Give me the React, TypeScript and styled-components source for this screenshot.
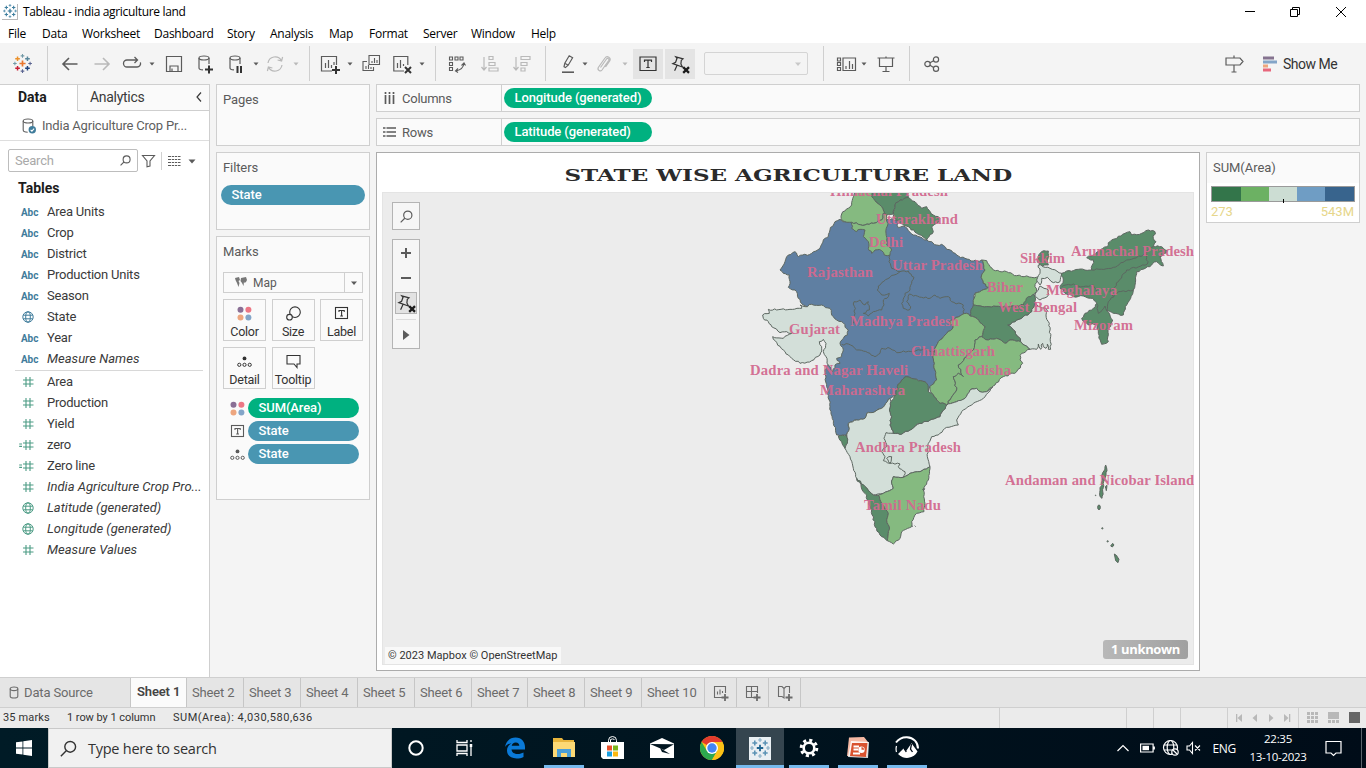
import React from 'react';
import styled, { createGlobalStyle, css } from 'styled-components';

const GlobalStyle = createGlobalStyle`
  * { box-sizing: border-box; }
  html, body { margin: 0; padding: 0; overflow: hidden; }
  svg { display: block; flex: none; }
`;

const ui = `Roboto, 'Liberation Sans', sans-serif`;
const segoe = `'Open Sans', 'Noto Sans', sans-serif`;
const line = '#cfcfcf';
const ink = '#5b5b5b';

const Window = styled.div`
  width: 1366px;
  height: 768px;
  display: flex;
  flex-direction: column;
  background: #f4f4f4;
  font-family: ${ui};
  font-size: 13px;
  color: #3a3a3a;
  white-space: nowrap;
  overflow: hidden;
`;

/* ---------- title and menu ---------- */
const TitleBar = styled.header`
  height: 23px;
  flex: none;
  background: #fff;
  display: flex;
  align-items: center;
  padding-left: 2px;
  font: 12px ${segoe};
  color: #000;
  letter-spacing: -0.33px;
`;
const AppBadge = styled.span`
  width: 16px;
  height: 16px;
  display: grid;
  place-items: center;
  border-right: 1px solid #b9b9b9;
  border-bottom: 1px solid #b9b9b9;
`;
const TitleText = styled.span`
  margin-left: 5px;
  flex: 1;
`;
const WindowButtons = styled.div`
  display: flex;
  gap: 34px;
  padding-right: 19px;
`;
const MenuBar = styled.nav`
  height: 20px;
  flex: none;
  background: #fff;
  display: flex;
  align-items: center;
  padding: 1px 0 0 8px;
  font: 12px ${segoe};
  color: #000;
  letter-spacing: -0.25px;
`;
const MenuItem = styled.span<{ $w: number }>`
  width: ${(p) => p.$w}px;
  line-height: 18px;
`;

/* ---------- toolbar ---------- */
const Toolbar = styled.div`
  height: 41px;
  flex: none;
  display: flex;
  align-items: center;
  padding-left: 13px;
  color: ${ink};
`;
const Slot = styled.span<{ $gap: number; $dim?: boolean }>`
  margin-left: ${(p) => p.$gap}px;
  flex: none;
  color: ${(p) => (p.$dim ? '#b9b9b9' : ink)};
`;
const Divider = styled.i<{ $gap: number }>`
  width: 1px;
  height: 35px;
  margin-left: ${(p) => p.$gap}px;
  background: ${line};
`;
const ToggleButton = styled.span<{ $gap: number }>`
  width: 30px;
  height: 30px;
  margin-left: ${(p) => p.$gap}px;
  background: #e4e4e4;
  display: grid;
  place-items: center;
  color: #333;
`;
const FitSelect = styled.span`
  width: 104px;
  height: 23px;
  margin-left: 9px;
  border: 1px solid #d4d4d4;
  border-radius: 2px;
  display: flex;
  align-items: center;
  justify-content: flex-end;
  padding-right: 5px;
  color: #c8c8c8;
`;
const ShowMe = styled.span`
  margin-left: 5px;
  font-size: 14px;
  letter-spacing: -0.5px;
  color: #333;
`;

/* ---------- body ---------- */
const Body = styled.main`
  height: 593px;
  flex: none;
  display: flex;
`;
const DataPane = styled.aside`
  width: 210px;
  flex: none;
  background: #fff;
  border-right: 1px solid ${line};
  border-top: 1px solid ${line};
`;
const PaneTabs = styled.div`
  display: flex;
  height: 26px;
`;
const DataTab = styled.div`
  width: 77px;
  padding-left: 18px;
  line-height: 25px;
  font-size: 14px;
  font-weight: 700;
  color: #1c1c1c;
`;
const AnalyticsTab = styled.div`
  flex: 1;
  display: flex;
  align-items: center;
  justify-content: space-between;
  padding: 0 6px 1px 12px;
  background: #fafafa;
  border-left: 1px solid ${line};
  border-bottom: 1px solid ${line};
  font-size: 14px;
  letter-spacing: -0.3px;
  color: #3a3a3a;
`;
const SourceRow = styled.div`
  height: 30px;
  border-bottom: 1px solid #dedede;
  display: flex;
  align-items: center;
  gap: 5px;
  padding-left: 22px;
  letter-spacing: -0.2px;
  color: #5f5f5f;
`;
const SearchRow = styled.div`
  display: flex;
  align-items: center;
  padding: 8px 0 0 8px;
  color: ${ink};
`;
const SearchBox = styled.div`
  width: 130px;
  height: 23px;
  border: 1px solid #bdbdbd;
  border-radius: 2px;
  display: flex;
  align-items: center;
  justify-content: space-between;
  padding: 0 6px;
  letter-spacing: -0.2px;
  color: #a9a9a9;
`;
const TablesTitle = styled.h2`
  margin: 7px 0 0 18px;
  font-size: 14px;
  line-height: 19px;
  font-weight: 700;
  color: #1c1c1c;
`;
const FieldList = styled.ul<{ $second?: boolean }>`
  list-style: none;
  margin: ${(p) => (p.$second ? '1px 0 0 15px' : '3px 0 0')};
  padding: 0;
  ${(p) =>
    p.$second &&
    css`
      width: 188px;
      border-top: 1px solid #d8d8d8;
    `}
`;
const Field = styled.li<{ $second?: boolean; $italic?: boolean }>`
  height: 21px;
  display: flex;
  align-items: center;
  padding-left: ${(p) => (p.$second ? 3 : 18)}px;
  font-style: ${(p) => (p.$italic ? 'italic' : 'normal')};
  letter-spacing: ${(p) => (p.$italic ? 0.02 : -0.22)}px;
`;
const FieldIcon = styled.span<{ $green?: boolean }>`
  width: 29px;
  display: flex;
  align-items: center;
  font: 700 10px ${ui};
  letter-spacing: -0.1px;
  color: ${(p) => (p.$green ? '#4b9b84' : '#3f7c9b')};
`;
const AbcMark = styled.span`
  padding: 1px 0 0 3px;
`;

const Cards = styled.section`
  width: 154px;
  margin-left: 6px;
  flex: none;
  display: flex;
  flex-direction: column;
  gap: 6px;
`;
const Card = styled.div<{ $h: number }>`
  height: ${(p) => p.$h}px;
  border: 1px solid ${line};
  background: #fafafa;
`;
const CardTitle = styled.h3`
  margin: 0;
  padding: 0 6px;
  font-size: 13px;
  font-weight: 400;
  line-height: 30px;
  letter-spacing: -0.1px;
  color: #5b5b5b;
`;
const Pill = styled.span<{ $w: number; $green?: boolean }>`
  display: block;
  width: ${(p) => p.$w}px;
  height: 20px;
  padding-left: 10.5px;
  border-radius: 10px;
  background: ${(p) => (p.$green ? '#00b180' : '#4996b2')};
  color: #fff;
  font-weight: 500;
  font-size: 13px;
  line-height: 20px;
  letter-spacing: -0.1px;
`;
const FilterSlot = styled.div`
  padding: 2px 0 0 4px;
`;
const MarkType = styled.div`
  margin: 5px 0 0 6px;
  width: 140px;
  height: 21px;
  border: 1px solid ${line};
  display: flex;
  align-items: center;
  color: #5b5b5b;
  padding-left: 11px;
`;
const MarkName = styled.span`
  flex: 1;
  padding-left: 6px;
  font-size: 12px;
`;
const MarkCaret = styled.span`
  width: 18px;
  height: 19px;
  border-left: 1px solid ${line};
  display: grid;
  place-items: center;
  color: ${ink};
`;
const MarkGrid = styled.div`
  display: grid;
  grid-template-columns: repeat(3, 43px);
  gap: 6px 5.5px;
  margin: 6px 0 0 6px;
`;
const MarkButton = styled.div`
  height: 42px;
  border: 1px solid ${line};
  display: flex;
  flex-direction: column;
  align-items: center;
  justify-content: space-between;
  padding-top: 6px;
  color: #333;
  font-size: 12.5px;
  line-height: 16px;
  letter-spacing: -0.25px;
`;
const Assigned = styled.div`
  display: flex;
  flex-direction: column;
  gap: 3px;
  margin: 9px 0 0 13px;
  color: ${ink};
`;
const AssignedRow = styled.div`
  display: flex;
  align-items: center;
  gap: 3px;
`;

const Work = styled.section`
  flex: 1;
  display: flex;
  flex-direction: column;
  gap: 6px;
  margin-left: 6px;
  padding-right: 6px;
`;
const Shelf = styled.div`
  height: 28px;
  flex: none;
  border: 1px solid ${line};
  background: #fafafa;
  display: flex;
  align-items: center;
`;
const ShelfLabel = styled.div`
  width: 125px;
  height: 26px;
  border-right: 1px solid ${line};
  margin-right: 2px;
  display: flex;
  align-items: center;
  gap: 6px;
  padding-left: 6px;
  letter-spacing: -0.25px;
  color: ${ink};
`;
const Stage = styled.div`
  display: flex;
  gap: 6px;
  align-items: flex-start;
`;
const View = styled.div`
  width: 824px;
  height: 519px;
  border: 1px solid #acacac;
  background: #fff;
  padding: 0 5px;
  display: flex;
  flex-direction: column;
`;
const SheetTitle = styled.h1`
  margin: 0;
  height: 39px;
  display: flex;
  align-items: center;
  justify-content: center;
  padding-top: 5px;
  color: #2b2b2b;
  font: 700 17px 'DejaVu Serif', serif;
`;
const TitleStretch = styled.span`
  display: inline-block;
  transform: scaleX(1.354);
`;
const MapArea = styled.div`
  position: relative;
  height: 473px;
  width: 812px;
  background: #ececec;
  border: 1px solid #e4e4e4;
`;
const MapTools = styled.div`
  position: absolute;
  left: 9px;
  top: 9px;
  display: flex;
  flex-direction: column;
  gap: 9px;
  color: ${ink};
`;
const ToolBox = styled.div<{ $h: number }>`
  width: 28px;
  height: ${(p) => p.$h}px;
  border: 1px solid #b4b4b4;
  background: #f6f6f6;
  display: flex;
  flex-direction: column;
  align-items: center;
  padding-top: 4px;
`;
const ToolCell = styled.span<{ $h: number }>`
  height: ${(p) => p.$h}px;
  display: grid;
  place-items: center;
`;
const PinCell = styled.span`
  width: 22px;
  height: 22px;
  border: 1px solid #b4b4b4;
  background: #e2e2e2;
  display: grid;
  place-items: center;
  color: #333;
`;
const ToolRule = styled.i`
  width: 20px;
  height: 1px;
  margin: 5px 0;
  background: #dcdcdc;
`;
const Attribution = styled.span`
  position: absolute;
  left: 2px;
  bottom: 0;
  height: 17px;
  padding: 0 3px;
  background: #f8f8f8;
  color: #333;
  font-size: 11px;
  line-height: 17px;
  letter-spacing: 0.02px;
`;
const Unknown = styled.span`
  position: absolute;
  right: 5px;
  bottom: 5px;
  width: 85px;
  height: 19px;
  border-radius: 3px;
  background: linear-gradient(90deg, #b8b8b8, #a0a0a0);
  color: #fff;
  text-align: center;
  font: 700 13px/18px ${segoe};
  letter-spacing: -0.35px;
`;
const Legend = styled.div`
  width: 154px;
  height: 71px;
  border: 1px solid ${line};
  background: #fff;
`;
const LegendTitle = styled.div`
  height: 30px;
  padding-left: 6px;
  line-height: 30px;
  letter-spacing: -0.05px;
  background: #fafafa;
  color: #5b5b5b;
`;
const Ramp = styled.div`
  position: relative;
  margin: 3px 0 0 4px;
  width: 144px;
  height: 16px;
  border: 1px solid #9a9a9a;
  display: grid;
  grid-template-columns: 29px 28px 28px 28px 29px;
`;
const Swatch = styled.i<{ $c: string }>`
  background: ${(p) => p.$c};
`;
const Tick = styled.i`
  position: absolute;
  left: 71px;
  top: 12px;
  width: 1px;
  height: 4px;
  background: #000;
`;
const RampLabels = styled.div`
  display: flex;
  justify-content: space-between;
  padding: 0 5px 0 4px;
  line-height: 19px;
  color: #e6d68a;
`;

/* ---------- sheet tabs and status ---------- */
const SheetTabs = styled.div`
  height: 31px;
  flex: none;
  border-top: 1px solid ${line};
  border-bottom: 1px solid ${line};
  background: #e5e5e5;
  display: flex;
`;
const SheetTab = styled.div<{ $w: number; $active?: boolean }>`
  width: ${(p) => p.$w}px;
  border-right: 1px solid #c6c6c6;
  display: flex;
  align-items: center;
  padding-left: 5px;
  letter-spacing: -0.15px;
  color: #6b6b6b;
  ${(p) =>
    p.$active &&
    css`
      background: #fbfbfb;
      color: #444;
      font-weight: 600;
      padding: 0 0 2px 6px;
      letter-spacing: -0.15px;
    `}
`;
const NewTab = styled(SheetTab)`
  padding-left: 8px;
`;
const SourceTab = styled(SheetTab)`
  padding-left: 9px;
  gap: 5px;
  letter-spacing: -0.15px;
`;
const StatusBar = styled.footer`
  height: 20px;
  flex: none;
  background: #ebebeb;
  display: flex;
  align-items: stretch;
  padding-left: 3px;
  font-size: 11px;
  line-height: 20px;
  color: #333;
`;
const StatusText = styled.span<{ $w: number; $ls?: number }>`
  width: ${(p) => p.$w}px;
  letter-spacing: ${(p) => p.$ls ?? 0}px;
`;
const StatusCell = styled.span<{ $w: number }>`
  width: ${(p) => p.$w}px;
  border-left: 1px solid ${line};
  display: flex;
  align-items: center;
  color: #b8b8b8;
`;

/* ---------- taskbar ---------- */
const Taskbar = styled.div`
  height: 40px;
  flex: none;
  background: linear-gradient(90deg, #001b26 0%, #001520 45%, #000c18 100%);
  display: flex;
  color: #fff;
  font-family: ${segoe};
`;
const StartButton = styled.div`
  width: 48px;
  display: grid;
  place-items: center;
`;
const TaskSearch = styled.div`
  width: 344px;
  border: 1px solid #c9c9c9;
  background: #f1f1f1;
  color: #333;
  display: flex;
  align-items: center;
  gap: 11px;
  padding-left: 11px;
  font-size: 14.5px;
  letter-spacing: -0.25px;
`;
const TaskIcon = styled.div<{ $w: number; $open?: boolean; $active?: boolean; $ml?: number }>`
  width: ${(p) => p.$w}px;
  margin-left: ${(p) => p.$ml ?? 0}px;
  display: grid;
  place-items: center;
  background: ${(p) => (p.$active ? '#35454f' : 'transparent')};
  border-bottom: 3px solid ${(p) => (p.$open ? '#76b9ed' : 'transparent')};
  background-clip: padding-box;
  padding-top: 3px;
`;
const Tray = styled.div`
  margin-left: auto;
  display: flex;
  align-items: center;
  font-size: 12px;
  letter-spacing: -0.3px;
`;
const TrayItem = styled.span<{ $gap: number }>`
  margin-left: ${(p) => p.$gap}px;
`;
const Clock = styled.div`
  width: 60px;
  margin-left: 12px;
  text-align: center;
  line-height: 18px;
  font-size: 11.5px;
`;
const DesktopEdge = styled.i`
  width: 1px;
  height: 40px;
  margin: 0 4px 0 19px;
  background: #5a646c;
`;

/* ---------- icons ---------- */
type G = { w?: number; h?: number; vb?: string; sw?: number; children: React.ReactNode };
const Icon = ({ w = 20, h = 20, vb, sw = 1.2, children }: G) => (
  <svg width={w} height={h} viewBox={vb ?? `0 0 ${w} ${h}`} fill="none" stroke="currentColor" strokeWidth={sw}>
    {children}
  </svg>
);
const Caret = ({ s = 6 }: { s?: number }) => (
  <svg width={8} height={8} viewBox="0 0 8 8" fill="currentColor">
    <path d={`M${4 - s / 2} 2.4h${s}l${-s / 2} ${s * 0.6}z`} />
  </svg>
);
const TableauMark = ({ size, colors }: { size: number; colors: string[] }) => {
  const plus = (x: number, y: number, r: number, c: string, sw = 1.4) => (
    <path key={`${x}-${y}`} d={`M${x - r} ${y}h${r * 2}M${x} ${y - r}v${r * 2}`} stroke={c} strokeWidth={sw} />
  );
  return (
    <svg width={size} height={size} viewBox="1 1 18 18" fill="none">
      {plus(10, 10, 2.9, colors[0], 1.6)}
      {plus(5.3, 5.5, 2.2, colors[1])}
      {plus(14.7, 5.5, 2.2, colors[2])}
      {plus(5.3, 14.5, 2.2, colors[3])}
      {plus(14.7, 14.5, 2.2, colors[4])}
      {plus(10, 2.8, 1.7, colors[5], 1)}
      {plus(10, 17.2, 1.7, colors[6], 1)}
      {plus(2.8, 10, 1.7, colors[5], 1)}
      {plus(17.2, 10, 1.7, colors[6], 1)}
    </svg>
  );
};
const Pin = () => (
  <Icon sw={1.2}>
    <path d="M5.800 2.800l7.200 2-1.700 1.500-.4 3.700 1.500 3-9.600-3.400 2.800-1.400 1.400-3.900z M7 11.400l-2.400 5.300" />
    <path d="M13.200 13.200l5.800 5.600m0-5.600l-5.800 5.600" strokeWidth="2.300" stroke="#1c1c1c" />
  </Icon>
);
const Magnifier = ({ s = 12, sw = 1.2 }: { s?: number; sw?: number }) => (
  <Icon w={s} h={s} vb="0 0 12 12" sw={sw}>
    <circle cx="7.2" cy="4.8" r="3.8" />
    <path d="M4.4 7.6L.6 11.4" />
  </Icon>
);
const Hash = ({ calc }: { calc?: boolean }) => (
  <Icon w={16} h={12} sw={1.1}>
    <path d="M8 1v10M12 1v10M5 4h10.500M5 8h10.500" />
    {calc && <path d="M1.200 5h2.800M1.200 7.400h2.800" />}
  </Icon>
);
const Globe = () => (
  <Icon w={16} h={12} sw={1}>
    <circle cx="10" cy="6" r="5.200" />
    <ellipse cx="10" cy="6" rx="2.300" ry="5.200" />
    <path d="M5.300 4.200h9.400M5.300 7.800h9.400" />
  </Icon>
);
const Dots = () => (
  <svg width={15} height={15} viewBox="0 0 15 15">
    <circle cx="3.5" cy="3.7" r="3" fill="#8a6f95" />
    <circle cx="11.4" cy="3.7" r="3" fill="#ec7785" />
    <circle cx="3.5" cy="11.5" r="3" fill="#eda67f" />
    <circle cx="11.4" cy="11.5" r="3" fill="#83a5c8" />
  </svg>
);
const LabelT = () => (
  <Icon w={15} h={15} sw={1.1}>
    <rect x="1.5" y="1.5" width="12" height="11" />
    <path d="M5 6V4.500h5.200V6M7.600 4.500v5.600M6.200 10h2.800" />
  </Icon>
);
const DetailDots = () => (
  <Icon w={15} h={15} sw={1}>
    <circle cx="7.5" cy="4.4" r="1.9" fill="currentColor" stroke="none" />
    <circle cx="2.3" cy="10.8" r="1.6" />
    <circle cx="7.5" cy="10.8" r="1.6" />
    <circle cx="12.7" cy="10.8" r="1.6" />
  </Icon>
);

/* ---------- map ---------- */
type P = [number, number];
const parse = (s: string): P[] => s.trim().split(/\s+/).map((q) => q.split(',').map(Number) as P);

/* Deterministic roughening, so the outlines come out the same on every render. */
const rough = (s: string, close: boolean, amp = 2.9) => {
  const pts = parse(s);
  const all = close ? [...pts, pts[0]] : pts;
  let d = `M${all[0]}`;
  for (let i = 1; i < all.length; i++) {
    const flip = all[i][0] < all[i - 1][0];
    const [a, b] = flip ? [all[i], all[i - 1]] : [all[i - 1], all[i]];
    const len = Math.hypot(b[0] - a[0], b[1] - a[1]);
    const n = Math.max(1, Math.round(len / 7));
    const mids: string[] = [];
    for (let k = 1; k < n; k++) {
      const x = a[0] + ((b[0] - a[0]) * k) / n;
      const y = a[1] + ((b[1] - a[1]) * k) / n;
      const r = Math.sin(Math.round(x) * 12.9898 + Math.round(y) * 78.233) * 43758.5453;
      const t = (r - Math.floor(r) - 0.5) * 2 * amp;
      mids.push(`L${(x - ((b[1] - a[1]) / len) * t).toFixed(1)} ${(y + ((b[0] - a[0]) / len) * t).toFixed(1)}`);
    }
    if (flip) mids.reverse();
    d += mids.join('') + `L${all[i]}`;
  }
  return close ? d + 'Z' : d;
};

const BLUE = '#5f7fa2';
const DARK = '#5a8c6a';
const GREEN = '#85ba80';
const PALE = '#d3dfd9';

const regions: { c: string; p: string; a?: number }[] = [
  { c: BLUE, p: '300,88 308,95 345,85 420,85 470,90 475,113 490,108 505,122 520,135 560,150 575,155 590,165 605,163 620,178 635,182 650,195 675,205 700,213 725,210 735,240 725,255 730,280 745,292 705,310 700,340 705,355 690,378 680,370 660,378 630,395 640,410 615,435 600,450 590,465 582,490 578,500 585,540 590,570 570,590 565,605 555,600 560,580 530,568 500,560 485,570 472,590 468,615 450,625 425,655 405,665 380,670 375,685 350,690 325,700 328,715 320,735 300,740 290,735 280,700 270,650 260,590 255,540 275,500 300,440 250,380 190,345 175,325 165,300 145,292 150,275 148,255 130,250 120,240 135,215 145,195 165,185 175,200 215,190 240,175 250,150 265,140 270,120 285,95' },
  { c: PALE, p: '85,358 110,360 150,358 185,355 180,345 195,350 215,343 245,345 270,355 275,375 290,390 305,395 325,420 322,435 310,445 300,460 310,480 305,500 290,505 300,520 285,525 278,545 265,525 258,500 250,485 258,460 250,448 238,455 245,470 240,495 215,512 180,520 155,505 130,480 100,448 98,440 130,445 155,430 140,425 120,428 95,410 85,395 70,385 68,375 88,370' },
  { c: DARK, p: '385,-8 505,-8 505,22 480,30 465,45 460,72 440,75 425,50 400,25' },
  { c: DARK, p: '505,22 525,35 545,55 560,50 580,75 600,85 590,100 575,110 580,125 560,150 530,130 505,110 480,100 460,80 465,45 480,30' },
  { c: GREEN, p: '345,-8 335,45 305,72 307,92 335,97 355,103 375,105 400,100 415,92 425,90 430,70 440,75 425,50 400,25 385,-8' },
  { c: GREEN, p: '335,97 335,115 350,125 360,118 375,120 370,140 385,155 385,175 395,190 405,180 425,182 433,195 450,195 455,180 440,165 438,130 442,108 440,75 430,70 425,90 415,92 400,100 375,105 355,103' },
  { c: GREEN, p: '725,210 740,212 760,240 800,245 830,257 875,262 898,260 885,290 890,305 875,320 860,330 850,345 810,350 740,350 700,345 705,310 745,292 730,280 725,255 735,240' },
  { c: PALE, p: '803,405 825,395 850,380 875,365 885,340 900,350 922,360 918,375 928,400 932,440 932,478 925,478 922,462 918,475 910,470 908,460 902,478 895,462 890,478 870,478 842,455 835,440 820,420' },
  { c: DARK, p: '700,345 740,350 810,350 850,345 865,320 885,315 885,340 875,365 850,380 825,395 803,405 820,420 835,440 842,455 810,450 795,460 770,445 745,450 725,440 735,410 720,398 705,382 690,378' },
  { c: GREEN, p: '690,378 705,382 720,398 735,410 725,440 705,450 700,480 680,500 655,525 670,560 655,550 640,560 650,600 630,630 620,645 595,635 575,610 570,590 590,570 585,540 578,500 582,490 590,465 600,450 615,435 640,410 630,395 660,378 680,370' },
  { c: GREEN, p: '725,440 745,450 770,445 795,460 810,450 842,455 870,478 845,490 840,510 848,520 830,545 790,560 765,585 740,605 720,605 710,595 690,600 675,625 650,635 620,645 630,630 650,600 640,560 655,550 670,560 655,525 680,500 700,480 705,450' },
  { c: PALE, a: 1.6, p: '758,592 740,605 720,605 710,595 690,600 675,625 650,635 620,645 610,660 600,680 570,690 540,700 510,720 480,733 460,730 450,705 455,680 448,660 453,635 450,625 425,655 405,665 380,670 375,685 350,690 325,700 328,715 320,735 322,750 315,775 330,800 340,835 350,865 375,890 400,915 430,910 460,895 455,880 460,860 490,862 510,850 540,845 570,830 562,800 565,760 575,740 595,735 620,712 655,705 650,690 665,665 700,640 730,625' },
  { c: DARK, p: '468,615 472,590 485,570 500,560 530,568 560,580 565,605 575,610 595,635 620,645 610,660 600,680 570,690 540,700 510,720 480,733 460,730 450,705 455,680 448,660 453,635' },
  { c: DARK, p: '295,738 320,735 322,760 315,775 305,755' },
  { c: DARK, p: '350,865 375,890 400,915 415,915 425,940 445,970 440,990 448,1010 442,1052 425,1040 405,1010 395,960 375,910' },
  { c: GREEN, a: 1.8, p: '442,1052 460,1062 480,1045 485,1025 515,1010 515,995 530,970 552,965 555,940 550,900 565,870 570,830 540,845 510,850 490,862 460,860 455,880 460,895 430,910 415,915 425,940 445,970 440,990 448,1010' },
  { c: DARK, p: '895,200 905,185 925,183 925,225 900,228 892,215' },
  { c: PALE, p: '895,225 930,235 965,250 960,275 940,278 922,262 905,265 900,285 890,270 900,250' },
  { c: PALE, p: '890,305 900,288 925,300 922,320 900,330 885,320' },
  { c: DARK, p: '965,250 980,243 1015,238 1055,240 1060,210 1040,203 1060,195 1100,170 1110,155 1155,130 1170,125 1175,135 1205,130 1225,120 1245,125 1240,145 1248,155 1240,170 1265,170 1282,182 1260,200 1270,228 1250,215 1235,225 1190,245 1187,270 1180,300 1172,325 1160,345 1150,375 1120,370 1100,362 1118,390 1104,420 1105,455 1085,463 1075,430 1070,400 1045,405 1025,385 1035,370 1060,355 1070,340 1060,325 1030,318 1000,320 975,310 960,290 970,270' },
  { c: DARK, p: '1097,825 1101,842 1094,868 1090,893 1086,925 1079,915 1080,893 1087,872 1088,848' },
  { c: DARK, a: 1, p: '1096,890 1101,886 1099,902' },
];
const borders = [
  '450,195 447,215 455,235 480,245 450,262 415,288 412,300 425,315 448,310 445,320 430,330 432,345 425,360 400,365 385,378 370,370 388,360 385,335 375,345 360,330 342,335 345,370 340,400',
  '480,245 505,243 522,262 515,280 510,300 495,310 485,340 490,355 508,360 512,350 500,335 508,312 520,318 545,322 570,325 585,315 600,325 625,320 635,335 670,345 672,372',
  '305,463 325,462 350,480 390,490 405,500 420,490 425,475 450,475 470,488 490,483 520,485 550,478 585,485',
  '460,730 438,728 432,745 440,770 425,785 435,800 430,812 450,820 440,805 455,800 450,820 480,822 475,830 495,845 490,862',
  '965,290 1000,282 1030,290 1060,285 1070,310',
  '1055,240 1120,232 1160,210 1210,195 1240,170',
  '1220,190 1222,222 1160,240 1135,275 1110,305 1120,320',
  '1180,300 1135,305 1105,335 1100,362',
  '1070,340 1075,370 1095,348 1100,362',
];
const labels: [string, number, number, number][] = [
  ['Himachal Pradesh', 830, 196, 118],
  ['Uttarakhand', 876, 224, 82],
  ['Delhi', 869, 247, 34],
  ['Rajasthan', 807, 277, 66],
  ['Uttar Pradesh', 892, 270, 91],
  ['Madhya Pradesh', 850, 326, 109],
  ['Gujarat', 789, 334, 51],
  ['Chhattisgarh', 911, 356, 84],
  ['Odisha', 965, 375, 46],
  ['Dadra and Nagar Haveli', 750, 375, 158],
  ['Maharashtra', 820, 395, 85],
  ['Andhra Pradesh', 855, 452, 106],
  ['Tamil Nadu', 864, 510, 77],
  ['Bihar', 987, 292, 36],
  ['Sikkim', 1020, 263, 45],
  ['West Bengal', 998, 312, 79],
  ['Arunachal Pradesh', 1071, 256, 123],
  ['Meghalaya', 1046, 295, 71],
  ['Mizoram', 1074, 330, 59],
  ['Andaman and Nicobar Islands', 1005, 485, 195],
];
const IndiaMap = () => (
  <svg width={811} height={472} viewBox="383 193 811 472">
    <g transform="translate(740 190) scale(.33333)" stroke="#5c6660" strokeWidth="3" strokeLinejoin="round">
      {regions.map((r, i) => (
        <path key={i} d={rough(r.p, true, r.a)} fill={r.c} />
      ))}
      {borders.map((b, i) => (
        <path key={i} d={rough(b, false)} fill="none" />
      ))}
      <g fill={DARK} strokeWidth="3">
        <ellipse cx="1077" cy="952" rx="4" ry="7" />
        <circle cx="1067" cy="916" r="1" />
        <circle cx="1087" cy="1015" r="2" />
        <circle cx="1103" cy="1054" r="2" />
        <path d="M1112 1068l6-8 4 5-5 6z" />
        <path d="M1123 1092l6 4 8 12-3 10-7-6z" />
        <path d="M548 898l6-2-3 6zM515 1008l4 1M524 1007l3 3" />
      </g>
    </g>
    <g fill="#d2698f" fillOpacity=".95" fontFamily="'Liberation Serif', serif" fontWeight="700" fontSize="14.7">
      {labels.map(([t, x, y, w]) => (
        <text key={t} x={x} y={y} textLength={w}>
          {t}
        </text>
      ))}
    </g>
  </svg>
);

/* ---------- data ---------- */
const menu: [string, number][] = [
  ['File', 34], ['Data', 40], ['Worksheet', 72], ['Dashboard', 73], ['Story', 43], ['Analysis', 59],
  ['Map', 40], ['Format', 54], ['Server', 48], ['Window', 60], ['Help', 40],
];
const dims = ['Area Units', 'Crop', 'District', 'Production Units', 'Season', 'State', 'Year', 'Measure Names'];
const measures: [string, string, boolean][] = [
  ['Area', 'hash', false], ['Production', 'hash', false], ['Yield', 'hash', false], ['zero', 'calc', false],
  ['Zero line', 'calc', false], ['India Agriculture Crop Pro...', 'hash', true],
  ['Latitude (generated)', 'globe', true], ['Longitude (generated)', 'globe', true], ['Measure Values', 'hash', true],
];
const sheets = [57, 57, 57, 57, 57, 56, 57, 57, 63];

const App = () => (
  <Window>
    <GlobalStyle />
    <TitleBar>
      <AppBadge>
        <TableauMark size={14} colors={['#2f7396', '#3f7f9f', '#3f7f9f', '#3f7f9f', '#3f7f9f', '#4b89a7', '#4b89a7']} />
      </AppBadge>
      <TitleText>Tableau - india agriculture land</TitleText>
      <WindowButtons>
        <Icon w={12} h={12} sw={1}><path d="M2 5.500h10" /></Icon>
        <Icon w={12} h={12} sw={1}><path d="M1.5 3.5h7v7h-7zM3.5 3.5v-2h7v7h-2" /></Icon>
        <Icon w={12} h={12} sw={1}><path d="M1 1l10 10M11 1L1 11" /></Icon>
      </WindowButtons>
    </TitleBar>
    <MenuBar>
      {menu.map(([t, w]) => <MenuItem key={t} $w={w}>{t}</MenuItem>)}
    </MenuBar>

    <Toolbar>
      <TableauMark size={19} colors={['#e8762d', '#eb912b', '#59879b', '#c72037', '#1f447e', '#7199a6', '#5b6591']} />
      <Divider $gap={15} />
      <Slot $gap={12}><Icon sw={1.6}><path d="M17.5 10H3M9 4l-6 6 6 6" /></Icon></Slot>
      <Slot $gap={12} $dim><Icon sw={1.6}><path d="M2.5 10H17M11 4l6 6-6 6" /></Icon></Slot>
      <Slot $gap={10}>
        <Icon sw={1.3}><path d="M15.500 6H5a3.500 3.500 0 000 7h10a3.500 3.500 0 003.400-4.600M12.500 3l3 3-3 3" /></Icon>
      </Slot>
      <Slot $gap={6}><Caret s={5} /></Slot>
      <Slot $gap={8}><Icon><path d="M2.5 2.5h15v15h-15zM6 17v-5h8v5M8 17v-2.5" /></Icon></Slot>
      <Slot $gap={12}>
        <Icon><ellipse cx="8" cy="4" rx="5" ry="2" /><path d="M3 4v10c0 1.200 2 1.800 4 1.900M13 4v6" /><path d="M9 15.500h8M13 11.500v8" strokeWidth="2" stroke="#333" /></Icon>
      </Slot>
      <Slot $gap={10}>
        <Icon><ellipse cx="9" cy="4" rx="5" ry="2" /><path d="M4 4v10c0 1.200 2 1.800 4 1.900M14 4v6" /><path d="M11.500 12v7M15 12v7" strokeWidth="2" stroke="#333" /></Icon>
      </Slot>
      <Slot $gap={6}><Caret s={5} /></Slot>
      <Slot $gap={5} $dim>
        <Icon><path d="M3 9a7.200 7.200 0 0113.400-2.400M17 11a7.200 7.200 0 01-13.400 2.400M17.600 3l-1 4-4-1M2.400 17l1-4 4 1" /></Icon>
      </Slot>
      <Slot $gap={7} $dim><Caret s={5} /></Slot>
      <Divider $gap={9} />
      <Slot $gap={10}>
        <Icon><path d="M12 17H1.500V2.500h15V11M5.500 14V9M8.500 14V6M11.500 14v-3M14 11V8" /><path d="M12 16h8M16 12v8" strokeWidth="2" stroke="#333" /></Icon>
      </Slot>
      <Slot $gap={6}><Caret s={5} /></Slot>
      <Slot $gap={7}>
        <Icon sw={1.1}><path d="M8 1.500h10.500v9H8zM11 9V7M13.500 9V4M16 9V6M6 7.500H2v9h10.500V13M5 15v-3M7.500 15v-4M10 15v-2" /></Icon>
      </Slot>
      <Slot $gap={12}>
        <Icon><path d="M11 17H.8V2.500h14V11M4.500 14V9M7.500 14V6M10.500 12v-2" /><path d="M12 13l6 6m0-6l-6 6" strokeWidth="2" stroke="#333" /></Icon>
      </Slot>
      <Slot $gap={5}><Caret s={5} /></Slot>
      <Divider $gap={9} />
      <Slot $gap={11}>
        <Icon sw={1.1}><path d="M2.500 3h3v3h-3zM8 3h3v3H8zM13 3h3v3h-3zM2.500 8.500h3v3h-3zM2.500 13.500h3v3h-3zM17 9c-.5 5-3 7-8 8M14.500 11.500L17 9l1.500 2.500M11 14.500L8.500 17l2.500 1.500" /></Icon>
      </Slot>
      <Slot $gap={13} $dim><Icon><path d="M4 3v12M1.500 13L4 16l2.500-3M9 2.500h4v3H9zM9 8.500h6v3H9zM9 14h9v3H9z" /></Icon></Slot>
      <Slot $gap={12} $dim><Icon><path d="M4 3v12M1.500 13L4 16l2.500-3M9 2.500h9v3H9zM9 8.500h6v3H9zM9 14h4v3H9z" /></Icon></Slot>
      <Divider $gap={13} />
      <Slot $gap={12}>
        <Icon><path d="M6 12.800l.8-3.600 4.400-7.400 3.400 2-4.400 7.400-2.800 2.400zM6.800 9.200l3.400 2" /><path d="M4 18.200h12" strokeWidth="1.600" /></Icon>
      </Slot>
      <Slot $gap={3}><Caret s={5} /></Slot>
      <Slot $gap={5} $dim>
        <Icon><path d="M6.500 13.500l6-8.500c1-1.500 3.200 0 2.200 1.500L8 16c-1.500 2-5 .3-3.700-2.500L11 4c2-3 6.500-.2 4.700 3l-4.200 6" /></Icon>
      </Slot>
      <Slot $gap={7} $dim><Caret s={5} /></Slot>
      <ToggleButton $gap={4}>
        <Icon w={18} h={18}><path d="M1 2h16v13.500H1zM5.500 7V5.200h7V7M9 5.200v7.300M7.300 12.500h3.400" /></Icon>
      </ToggleButton>
      <ToggleButton $gap={2}><Pin /></ToggleButton>
      <FitSelect><Caret /></FitSelect>
      <Divider $gap={15} />
      <Slot $gap={11}>
        <Icon w={22}><path d="M2.500 4h3v3h-3zM2.500 8.500h3v3h-3zM2.500 13.500h3v3h-3zM8 4h12.500v12.500H8zM11 15v-3M14.500 15V7M17.500 15v-5" /></Icon>
      </Slot>
      <Slot $gap={3}><Caret s={5} /></Slot>
      <Slot $gap={8}><Icon><path d="M1.500 4h17M3.500 4v8.500h13V4M10 2.500V4M10 12.500v5M6.500 17.500h7" /></Icon></Slot>
      <Divider $gap={13} />
      <Slot $gap={12}>
        <Icon><circle cx="5.500" cy="10" r="2.700" /><circle cx="14" cy="5.500" r="2.600" /><circle cx="14" cy="14.800" r="2.600" /><path d="M8 8.800l3.600-2M8 11.300l3.600 2.200" /></Icon>
      </Slot>
      <Slot $gap={282}><Icon><path d="M2 4h14l3 3.500-3 3.500H2zM10 1.500V4M10 11v7M7.500 18h5" /></Icon></Slot>
      <Slot $gap={18}>
        <svg width={16} height={16} viewBox="0 0 16 16">
          <path d="M1 .5h11v3H1z" fill="#85738f" /><path d="M1 4.500h14v3H1z" fill="#83a5c8" />
          <path d="M1 8.500h5v3H1z" fill="#eda67f" /><path d="M1 12.500h8v3H1z" fill="#e8677c" />
        </svg>
      </Slot>
      <ShowMe>Show Me</ShowMe>
    </Toolbar>

    <Body>
      <DataPane>
        <PaneTabs>
          <DataTab>Data</DataTab>
          <AnalyticsTab>Analytics<Icon w={8} h={12}><path d="M6 1.500L2 6l4 4.500" /></Icon></AnalyticsTab>
        </PaneTabs>
        <SourceRow>
          <Icon w={15} h={16} sw={1.1}>
            <ellipse cx="6" cy="3" rx="4.800" ry="2" /><path d="M1.200 3v9c0 1.300 2 2.200 4.500 2.300M10.800 3v5" />
            <circle cx="10.300" cy="11.800" r="3.700" fill="#3f7c9b" stroke="none" /><path d="M8.600 11.900l1.300 1.200 2.200-2.400" stroke="#fff" />
          </Icon>
          India Agriculture Crop Pr...
        </SourceRow>
        <SearchRow>
          <SearchBox>Search<Slot $gap={0}><Magnifier s={11} /></Slot></SearchBox>
          <Slot $gap={3}><Icon w={15} h={14} sw={1.1}><path d="M1.500 1.500h12L9 7v5l-3 .8V7z" /></Icon></Slot>
          <Slot $gap={5}><svg width={1} height={18}><rect width="1" height="18" fill="#d0d0d0" /></svg></Slot>
          <Slot $gap={6}><Icon w={13} h={12} sw={1.2}><path d="M0 1.500h12.500M0 4.500h12.500M0 7.500h12.500M0 10.500h12.500" strokeDasharray="3 .8 2.200 .8 2.200 .8" /></Icon></Slot>
          <Slot $gap={7}><Caret s={7} /></Slot>
        </SearchRow>
        <TablesTitle>Tables</TablesTitle>
        <FieldList>
          {dims.map((d) => (
            <Field key={d} $italic={d === 'Measure Names'}>
              <FieldIcon>{d === 'State' ? <Globe /> : <AbcMark>Abc</AbcMark>}</FieldIcon>{d}
            </Field>
          ))}
        </FieldList>
        <FieldList $second>
          {measures.map(([t, k, i]) => (
            <Field key={t} $second $italic={i}>
              <FieldIcon $green>{k === 'globe' ? <Globe /> : <Hash calc={k === 'calc'} />}</FieldIcon>{t}
            </Field>
          ))}
        </FieldList>
      </DataPane>

      <Cards>
        <Card $h={62}><CardTitle>Pages</CardTitle></Card>
        <Card $h={78}>
          <CardTitle>Filters</CardTitle>
          <FilterSlot><Pill $w={144}>State</Pill></FilterSlot>
        </Card>
        <Card $h={264}>
          <CardTitle>Marks</CardTitle>
          <MarkType>
            <svg width={12} height={11} viewBox="0 0 12 11" fill="#777"><path d="M0 1l4-1 1 3-1.500 1 1 2-1 4-1.500-4L.5 3zM6 1l5-1 1 3-1 2-1.500 1L9 4.500 8.500 9 7 6 5.500 4z" /></svg>
            <MarkName>Map</MarkName>
            <MarkCaret><Caret /></MarkCaret>
          </MarkType>
          <MarkGrid>
            <MarkButton><Dots />Color</MarkButton>
            <MarkButton><Icon w={15} h={15} sw={1.1}><circle cx="9" cy="6.200" r="5.300" /><circle cx="3.500" cy="11.200" r="2.800" fill="#fafafa" /></Icon>Size</MarkButton>
            <MarkButton><LabelT />Label</MarkButton>
            <MarkButton><DetailDots />Detail</MarkButton>
            <MarkButton><Icon w={15} h={15} sw={1.1}><path d="M1 1.500h13v8.500h-3v3.500L8 10H1z" /></Icon>Tooltip</MarkButton>
          </MarkGrid>
          <Assigned>
            <AssignedRow><Dots /><Pill $w={111} $green>SUM(Area)</Pill></AssignedRow>
            <AssignedRow><LabelT /><Pill $w={111}>State</Pill></AssignedRow>
            <AssignedRow><DetailDots /><Pill $w={111}>State</Pill></AssignedRow>
          </Assigned>
        </Card>
      </Cards>

      <Work>
        <Shelf>
          <ShelfLabel>
            <Icon w={13} h={12} sw={1.7}><path d="M2.500 0v2M6.500 0v2M10.500 0v2M2.500 3v9M6.500 3v9M10.500 3v9" /></Icon>Columns
          </ShelfLabel>
          <Pill $w={148} $green>Longitude (generated)</Pill>
        </Shelf>
        <Shelf>
          <ShelfLabel>
            <Icon w={13} h={12} sw={1.7}><path d="M0 2h2.500M0 6h2.500M0 10h2.500M3.500 2H13M3.500 6H13M3.500 10H13" /></Icon>Rows
          </ShelfLabel>
          <Pill $w={148} $green>Latitude (generated)</Pill>
        </Shelf>
        <Stage>
          <View>
            <SheetTitle><TitleStretch>STATE WISE AGRICULTURE LAND</TitleStretch></SheetTitle>
            <MapArea>
              <IndiaMap />
              <MapTools>
                <ToolBox $h={28}><ToolCell $h={18}><Magnifier s={13} sw={1.1} /></ToolCell></ToolBox>
                <ToolBox $h={110}>
                  <ToolCell $h={18}><Icon w={12} h={12} sw={2}><path d="M1 6h10M6 1v10" /></Icon></ToolCell>
                  <ToolCell $h={30}><Icon w={12} h={12} sw={2}><path d="M1 7h10" /></Icon></ToolCell>
                  <PinCell><Pin /></PinCell>
                  <ToolRule />
                  <ToolCell $h={20}><svg width={8} height={12} viewBox="0 0 8 12" fill="currentColor"><path d="M1 1l6.500 5L1 11z" /></svg></ToolCell>
                </ToolBox>
              </MapTools>
              <Attribution>© 2023 Mapbox © OpenStreetMap</Attribution>
              <Unknown>1 unknown</Unknown>
            </MapArea>
          </View>
          <Legend>
            <LegendTitle>SUM(Area)</LegendTitle>
            <Ramp>
              {['#33754a', '#6cb163', '#ccddd3', '#6f9dc4', '#38648d'].map((c) => <Swatch key={c} $c={c} />)}
              <Tick />
            </Ramp>
            <RampLabels><span>273</span><span>543M</span></RampLabels>
          </Legend>
        </Stage>
      </Work>
    </Body>

    <SheetTabs>
      <SourceTab $w={131}>
        <Icon w={10} h={13} sw={1.1}><ellipse cx="5" cy="2.800" rx="3.800" ry="1.800" /><path d="M1.200 2.800v7.500c0 2.300 7.600 2.300 7.600 0V2.800" /></Icon>
        Data Source
      </SourceTab>
      <SheetTab $w={56} $active>Sheet 1</SheetTab>
      {sheets.map((w, i) => <SheetTab key={i} $w={w}>Sheet {i + 2}</SheetTab>)}
      <NewTab $w={32}><Icon w={16} h={16} sw={1.1}><path d="M9 12.500H1.500v-11h11V8M4.500 9.500v-3M7 9.500v-5M9.500 8V6" /><path d="M8.500 12.500h7M12 9v7" strokeWidth="1.800" /></Icon></NewTab>
      <NewTab $w={32}><Icon w={16} h={16} sw={1.1}><path d="M9 12.500H1.500v-11h11V8M1.500 6.500h11M6.500 1.500v11" /><path d="M8.500 12.500h7M12 9v7" strokeWidth="1.800" /></Icon></NewTab>
      <NewTab $w={32}><Icon w={16} h={16} sw={1.1}><path d="M7 3.500L5 1.500H1.500v10H5l2 1.500V3.500l2-2h3.500V8" /><path d="M8.500 12.500h7M12 9v7" strokeWidth="1.800" /></Icon></NewTab>
    </SheetTabs>

    <StatusBar>
      <StatusText $w={64} $ls={0.15}>35 marks</StatusText>
      <StatusText $w={106} $ls={-0.05}>1 row by 1 column</StatusText>
      <StatusText $w={826} $ls={0.52}>SUM(Area): 4,030,580,636</StatusText>
      <StatusCell $w={127} /><StatusCell $w={27} /><StatusCell $w={27} /><StatusCell $w={47} />
      <StatusCell $w={71}>
        <svg width={70} height={10} viewBox="0 0 70 10" fill="currentColor">
          <path d="M8 1h1.300v8H8zM14 1v8L9.500 5zM29 1v8l-4.500-4zM41 1v8l4.500-4zM56 1v8l4.500-4zM61 1h1.300v8H61z" />
        </svg>
      </StatusCell>
      <StatusCell $w={68}>
        <svg width={66} height={12} viewBox="0 0 66 12" fill="currentColor">
          {[0, 4, 8].map((y) => [8, 12, 16].map((x) => <rect key={`${x}-${y}`} x={x} y={y} width="3" height="3" />))}
          <path d="M29 0h11v7H29zM29 8h3v3h-3zM33 8h3v3h-3zM37 8h3v3h-3z" /><path d="M50 0h11v11H50z" fill="#666" />
        </svg>
      </StatusCell>
    </StatusBar>

    <Taskbar>
      <StartButton>
        <svg width={16} height={16} viewBox="0 0 16 16" fill="#fff"><path d="M0 2.300l6.500-.9v6.200H0zM7.300 1.300L16 0v7.600H7.300zM0 8.400h6.500v6.200L0 13.700zM7.300 8.400H16V16l-8.700-1.300z" /></svg>
      </StartButton>
      <TaskSearch><Magnifier s={17} sw={1} />Type here to search</TaskSearch>
      <TaskIcon $w={48}><Icon w={18} h={18} sw={2}><circle cx="9" cy="9" r="6.700" /></Icon></TaskIcon>
      <TaskIcon $w={48}><Icon w={18} h={18} sw={1.300}><path d="M2 1v2.500h10V1M2 17v-2.500h10V17M2 6h10v6H2zM16 1v2M16 8v9" /><path d="M16 5v3" strokeWidth="2.500" /></Icon></TaskIcon>
      <TaskIcon $w={50} $ml={2}>
        <svg width={22} height={22} viewBox="0 0 22 22" fill="#0a7ad8"><path d="M1 10C2 4 6 .5 11.500.5 18 .5 21 5.500 21 10v2.500H7.500c.3 3 3 4.500 6 4.500 2.500 0 4.500-.6 6-1.500v4.500c-2 1-4.300 1.500-7 1.500C6.500 21.500 3 18 3 13.500c0-3.500 2-6 4.500-7.300C4.500 6.500 2.500 8 1 10zM7.700 8.800h7.600c0-2-1.200-3.400-3.500-3.400S8 7 7.700 8.800z" /></svg>
      </TaskIcon>
      <TaskIcon $w={40} $ml={4} $open>
        <svg width={22} height={20} viewBox="0 0 22 20"><path d="M0 0h9l1.500 2H21v17H0z" fill="#e8b53c" /><path d="M0 4h22v15H0z" fill="#fcd975" /><path d="M4 11h14v8h-4v-4H8v4H4z" fill="#4a9fd8" /></svg>
      </TaskIcon>
      <TaskIcon $w={48} $ml={4}>
        <svg width={23} height={24} viewBox="0 0 23 24"><path d="M0 6h23v17H2L0 21z" fill="#fff" /><path d="M7.500 8V4.500a4 4 0 018 0V8M9.500 6V3.500a4 4 0 014 0" fill="none" stroke="#fff" /><path d="M6 9.500h5v5H6z" fill="#e8502a" /><path d="M12 9.500h5v5h-5z" fill="#7ab51d" /><path d="M6 15.500h5v5H6z" fill="#1a9fe0" /><path d="M12 15.500h5v5h-5z" fill="#fbb812" /></svg>
      </TaskIcon>
      <TaskIcon $w={50} $ml={1}>
        <svg width={24} height={20} viewBox="0 0 24 20"><path d="M0 5.500L12 0l12 5.500V20H0z" fill="#fff" /><path d="M0 6l24 .2L14 12z" fill="#001520" /><path d="M10 10l10 6-8-2z" fill="#001520" /></svg>
      </TaskIcon>
      <TaskIcon $w={49}>
        <svg width={24} height={24} viewBox="0 0 24 24"><circle cx="12" cy="12" r="12" fill="#fbc116" /><path d="M12 12L1.600 6A12 12 0 0122.400 6z" fill="#e33b2e" /><path d="M1.600 6A12 12 0 0012 24l5.200-9H7z" fill="#2da94f" /><path d="M12 6h10.400A12 12 0 0112 24l5.200-9z" fill="#fbc116" /><circle cx="12" cy="12" r="6" fill="#fff" /><circle cx="12" cy="12" r="4.700" fill="#4285f4" /></svg>
      </TaskIcon>
      <TaskIcon $w={48} $active $open>
        <svg width={22} height={23} viewBox="0 0 22 23"><rect width="22" height="23" fill="#e9eff3" /><svg x="1" y="1" width="20" height="20"><TableauMark size={20} colors={['#1f6590', '#5b93b5', '#5b93b5', '#5b93b5', '#5b93b5', '#86adc5', '#86adc5']} /></svg></svg>
      </TaskIcon>
      <TaskIcon $w={40} $ml={5} $open>
        <svg width={20} height={20} viewBox="0 0 20 20" fill="none" stroke="#fff"><circle cx="10" cy="10" r="5.300" strokeWidth="2.600" /><circle cx="10" cy="10" r="7.800" strokeWidth="3" strokeDasharray="3.060 3.060" /></svg>
      </TaskIcon>
      <TaskIcon $w={40} $ml={9} $open>
        <svg width={24} height={24} viewBox="0 0 24 24"><path d="M3 1.500L18 1l4 5-1 14H1z" fill="#f5b9a4" /><path d="M5 5l18 1-1 16-20-1z" fill="#fff" opacity=".85" /><path d="M6 7h15.500L20 21 4 20z" fill="#d9532f" /><path d="M7.500 10.500h5.500M7.500 13.500h4.500M7 17.500h7" stroke="#fff" strokeWidth="1.800" /><circle cx="15.500" cy="13.800" r="3.200" fill="#fff" /><path d="M15.500 13.800V11a3 3 0 012.700 2.800z" fill="#d9532f" /></svg>
      </TaskIcon>
      <TaskIcon $w={40} $ml={9} $open>
        <Icon w={24} h={24} sw={2}>
          <path d="M1 6.500C4 2.500 8 1 12 1.200c6.500.3 11 5 11 11.300" />
          <path d="M3 18l5.500-5.500 2.500 2.700 5.500-8 6 8.300a11.500 10.500 0 01-19.500 2.500z" fill="#fff" stroke="none" />
          <path d="M9 12.500l2.300 3.500M16.500 8l-1 5 2 3" stroke="#000c18" strokeWidth="1.300" />
          <path d="M1.500 16c-.6-2-.6-4 0-6" strokeWidth="1.200" />
        </Icon>
      </TaskIcon>
      <Tray>
        <Icon w={14} h={10} sw={1.2}><path d="M1.500 8L7 2.500 12.500 8" /></Icon>
        <TrayItem $gap={10}><Icon w={15} h={10}><path d="M.6 1h12.500v8H.6zM14.300 3.500v3" /><path d="M2.500 2.800h6.500v4.400H2.500z" fill="#fff" stroke="none" /></Icon></TrayItem>
        <TrayItem $gap={7}><Icon w={18} h={18}><circle cx="8.500" cy="8.500" r="7" /><ellipse cx="8.500" cy="8.500" rx="3.300" ry="7" /><path d="M2 6h13M2 11h13" /><circle cx="13" cy="13" r="3.200" fill="#000c18" /><path d="M11 11l4 4" /></Icon></TrayItem>
        <TrayItem $gap={6}><Icon w={16} h={14} sw={1.1}><path d="M1 5h2.500l3-3.500v11l-3-3.500H1zM9 4.500l5 5M14 4.500l-5 5" /></Icon></TrayItem>
        <TrayItem $gap={10}>ENG</TrayItem>
        <Clock>22:35<br />13-10-2023</Clock>
        <TrayItem $gap={17}><Icon w={17} h={17}><path d="M1 1.500h15v11.500h-5l-2.500 2.500L6 13H1z" /></Icon></TrayItem>
        <DesktopEdge />
      </Tray>
    </Taskbar>
  </Window>
);

export default App;
